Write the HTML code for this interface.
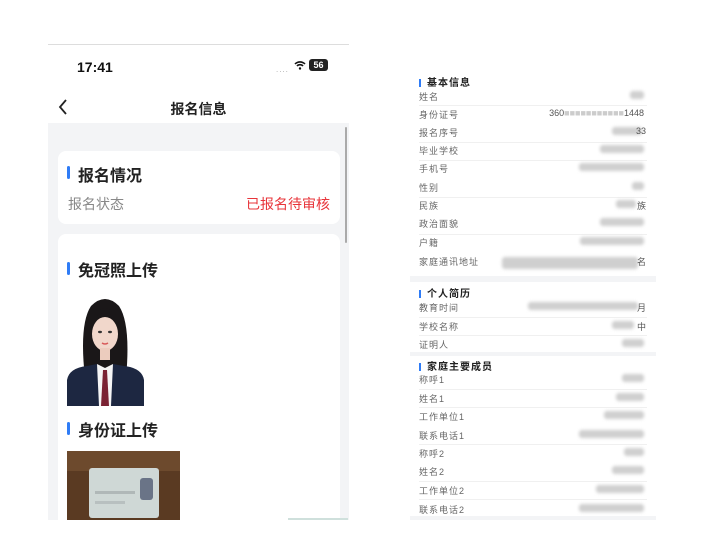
<!DOCTYPE html>
<html><head><meta charset="utf-8"><style>
*{margin:0;padding:0;box-sizing:border-box}
body{width:702px;height:537px;background:#fff;position:relative;overflow:hidden;font-family:"Liberation Sans","Noto Sans CJK SC",sans-serif}
.a{position:absolute}
.phone{left:48px;top:44px;width:301px;height:476px;background:#f3f4f6;overflow:hidden;border-top:1px solid #ddd}
.hdr{left:0;top:0;width:301px;height:78px;background:#fff}
.card{background:#fff;border-radius:8px}
.bar{width:3px;background:#2f7cf6;border-radius:2px}
.t{color:#222;font-weight:bold}
.rp{left:410px;top:70px;width:246px;height:450px;background:#f3f4f6}
.sec{position:absolute;left:0;width:246px;background:#fff}
.row{position:absolute;left:9px;font-size:9px;color:#666;letter-spacing:1px}
.ln{position:absolute;left:9px;right:9px;height:1px;background:#f0f0f0}
.blur{position:absolute;height:8px;background:#cfcfcf;border-radius:3px;filter:blur(1.5px)}
.sh{position:absolute;left:9px;font-size:10px;color:#222;font-weight:bold;letter-spacing:1px}
.sh i{display:inline-block;width:2px;height:8px;background:#2f7cf6;margin-right:6px;vertical-align:-1px}
.v{position:absolute;right:10px;font-size:9px;color:#555}
</style></head><body>
<div class="a phone">
  <div class="a hdr">
    <div class="a" style="left:29px;top:14px;font-size:14px;font-weight:bold;color:#111">17:41</div>
    <div class="a" style="left:228px;top:20px;font-size:8px;color:#aaa;letter-spacing:1px">....</div>
    <svg class="a" style="left:246px;top:15px" width="12" height="10" viewBox="0 0 12 10"><path d="M1 4a7 7 0 0 1 10 0M3 6a4 4 0 0 1 6 0" stroke="#111" stroke-width="1.6" fill="none"/><circle cx="6" cy="8.5" r="1.2" fill="#111"/></svg>
    <div class="a" style="left:261px;top:14px;width:19px;height:12px;background:#222;border-radius:3px;color:#fff;font-size:9px;font-weight:bold;text-align:center;line-height:12px">56</div>
    <svg class="a" style="left:10px;top:54px" width="10" height="16" viewBox="0 0 10 16"><path d="M8 1L2 8l6 7" stroke="#222" stroke-width="1.8" fill="none"/></svg>
    <div class="a t" style="left:0;width:301px;top:54px;text-align:center;font-size:14px">报名信息</div>
  </div>
  <div class="a" style="left:297px;top:82px;width:2px;height:116px;background:#aaa;border-radius:1px"></div>
  <div class="a card" style="left:10px;top:106px;width:282px;height:73px">
    <div class="a bar" style="left:9px;top:15px;height:13px"></div>
    <div class="a t" style="left:20px;top:11px;font-size:16px">报名情况</div>
    <div class="a" style="left:10px;top:43px;font-size:14px;color:#888">报名状态</div>
    <div class="a" style="right:10px;top:43px;font-size:14px;color:#e8343a">已报名待审核</div>
  </div>
  <div class="a card" style="left:10px;top:189px;width:282px;height:300px">
    <div class="a bar" style="left:9px;top:28px;height:13px"></div>
    <div class="a t" style="left:20px;top:23px;font-size:16px">免冠照上传</div>
    <svg class="a" style="left:9px;top:60px" width="77" height="112" viewBox="0 0 77 112">
      <rect width="77" height="112" fill="#fff"/>
      <path d="M18 84 Q12 30 24 12 Q38 -2 52 12 Q64 30 59 84Z" fill="#1a1718"/>
      <ellipse cx="38" cy="40" rx="13" ry="17" fill="#f1d7cb"/>
      <path d="M24 30 Q30 18 38 20 Q46 18 52 30 Q50 16 38 14 Q26 16 24 30Z" fill="#1a1718"/>
      <rect x="33" y="54" width="10" height="12" fill="#ecccbe"/>
      <path d="M0 86 Q2 74 20 72 L30 70 L38 112 L0 112Z" fill="#1d2741"/>
      <path d="M77 86 Q75 74 57 72 L46 70 L38 112 L77 112Z" fill="#1d2741"/>
      <path d="M30 70 L38 74 L46 70 L44 112 L32 112Z" fill="#f5f5f5"/>
      <path d="M36 76 L40 76 L42 112 L34 112Z" fill="#7a2233"/>
      <ellipse cx="33" cy="38" rx="2" ry="1.2" fill="#333"/><ellipse cx="43" cy="38" rx="2" ry="1.2" fill="#333"/>
      <path d="M35 49 Q38 51 41 49" stroke="#d85a5a" stroke-width="1.5" fill="none"/>
    </svg>
    <div class="a bar" style="left:9px;top:188px;height:13px"></div>
    <div class="a t" style="left:20px;top:183px;font-size:16px">身份证上传</div>
    <svg class="a" style="left:9px;top:217px" width="113" height="75" viewBox="0 0 113 75">
      <rect width="113" height="75" fill="#5a3a22"/>
      <rect width="113" height="20" fill="#7a5535" opacity=".6"/>
      <rect x="22" y="17" width="70" height="50" rx="3" fill="#cfd8d6"/>
      <rect x="73" y="27" width="13" height="22" rx="3" fill="#6a7487"/>
      <rect x="28" y="40" width="40" height="3" fill="#b0b8b8"/>
      <rect x="28" y="50" width="30" height="3" fill="#b8c0c0"/>
    </svg>
  </div>
  <div class="a" style="left:240px;top:473px;width:60px;height:4px;background:#cfe0dc"></div>
</div>

<div class="a rp">
  <div class="sec" style="top:0;height:206px">
    <div class="sh" style="top:4px"><i></i>基本信息</div>
    <div class="row" style="top:20px">姓名</div><div class="blur" style="right:12px;top:21px;width:14px"></div>
    <div class="ln" style="top:35px"></div>
    <div class="row" style="top:38px">身份证号</div><div class="v" style="top:38px;right:12px">360<span style="color:#ccc">■■■■■■■■■■■</span>1448</div>
    <div class="row" style="top:56px">报名序号</div><div class="blur" style="right:14px;top:57px;width:30px"></div><div class="v" style="top:56px">33</div>
    <div class="ln" style="top:72px"></div>
    <div class="row" style="top:74px">毕业学校</div><div class="blur" style="right:12px;top:75px;width:44px"></div>
    <div class="ln" style="top:90px"></div>
    <div class="row" style="top:92px">手机号</div><div class="blur" style="right:12px;top:93px;width:65px"></div>
    <div class="row" style="top:111px">性别</div><div class="blur" style="right:12px;top:112px;width:12px"></div>
    <div class="ln" style="top:127px"></div>
    <div class="row" style="top:129px">民族</div><div class="blur" style="right:20px;top:130px;width:20px"></div><div class="v" style="top:129px">族</div>
    <div class="row" style="top:147px">政治面貌</div><div class="blur" style="right:12px;top:148px;width:44px"></div>
    <div class="ln" style="top:164px"></div>
    <div class="row" style="top:166px">户籍</div><div class="blur" style="right:12px;top:167px;width:64px"></div>
    <div class="row" style="top:185px">家庭通讯地址</div><div class="blur" style="right:18px;top:187px;width:136px;height:12px"></div><div class="v" style="top:185px">名</div>
  </div>
  <div class="sec" style="top:212px;height:70px">
    <div class="sh" style="top:3px"><i></i>个人简历</div>
    <div class="row" style="top:19px">教育时间</div><div class="blur" style="right:18px;top:20px;width:110px"></div><div class="v" style="top:19px">月</div>
    <div class="ln" style="top:35px"></div>
    <div class="row" style="top:38px">学校名称</div><div class="blur" style="right:22px;top:39px;width:22px"></div><div class="v" style="top:38px">中</div>
    <div class="ln" style="top:53px"></div>
    <div class="row" style="top:56px">证明人</div><div class="blur" style="right:12px;top:57px;width:22px"></div>
  </div>
  <div class="sec" style="top:286px;height:160px">
    <div class="sh" style="top:2px"><i></i>家庭主要成员</div>
    <div class="row" style="top:17px">称呼1</div><div class="blur" style="right:12px;top:18px;width:22px"></div>
    <div class="ln" style="top:33px"></div>
    <div class="row" style="top:36px">姓名1</div><div class="blur" style="right:12px;top:37px;width:28px"></div>
    <div class="ln" style="top:51px"></div>
    <div class="row" style="top:54px">工作单位1</div><div class="blur" style="right:12px;top:55px;width:40px"></div>
    <div class="row" style="top:73px">联系电话1</div><div class="blur" style="right:12px;top:74px;width:65px"></div>
    <div class="ln" style="top:88px"></div>
    <div class="row" style="top:91px">称呼2</div><div class="blur" style="right:12px;top:92px;width:20px"></div>
    <div class="row" style="top:109px">姓名2</div><div class="blur" style="right:12px;top:110px;width:32px"></div>
    <div class="ln" style="top:125px"></div>
    <div class="row" style="top:128px">工作单位2</div><div class="blur" style="right:12px;top:129px;width:48px"></div>
    <div class="ln" style="top:143px"></div>
    <div class="row" style="top:147px">联系电话2</div><div class="blur" style="right:12px;top:148px;width:65px"></div>
  </div>
</div>
</body></html>
